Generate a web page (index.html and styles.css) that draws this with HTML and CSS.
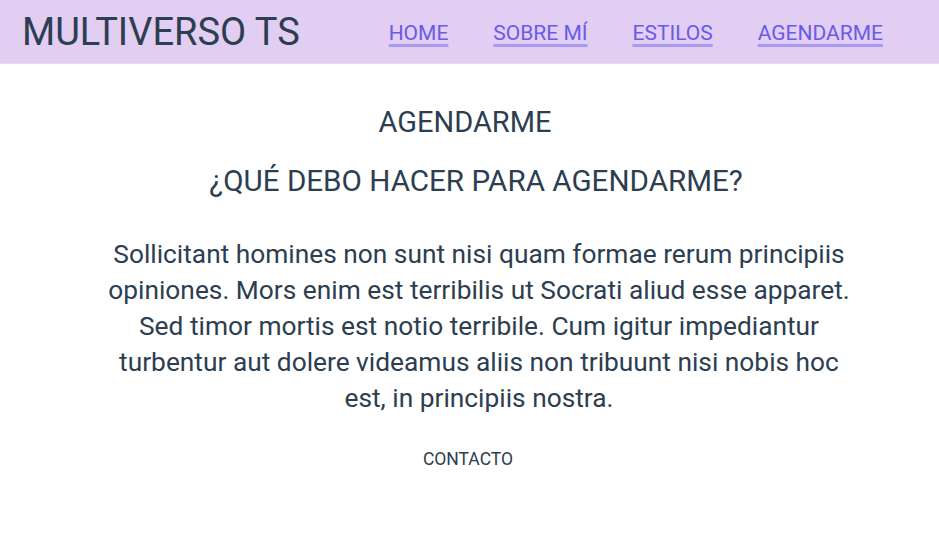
FILE: index.html
```html
<!DOCTYPE html>
<html lang="es">
<head>
<meta charset="utf-8">
<title>Multiverso TS</title>
<link rel="stylesheet" href="styles.css">
</head>
<body>
<header class="topbar">
  <div class="brand">MULTIVERSO TS</div>
  <nav class="nav">
    <a href="#" class="nav-link">HOME</a>
    <a href="#" class="nav-link">SOBRE MÍ</a>
    <a href="#" class="nav-link">ESTILOS</a>
    <a href="#" class="nav-link">AGENDARME</a>
  </nav>
</header>
<main class="content">
  <h1 class="title">AGENDARME</h1>
  <h2 class="subtitle">¿QUÉ DEBO HACER PARA AGENDARME?</h2>
  <p class="text">Sollicitant homines non sunt nisi quam formae rerum principiis opiniones. Mors enim est terribilis ut Socrati aliud esse apparet. Sed timor mortis est notio terribile. Cum igitur impediantur turbentur aut dolere videamus aliis non tribuunt nisi nobis hoc est, in principiis nostra.</p>
  <div class="contact">CONTACTO</div>
</main>
</body>
</html>
```
FILE: styles.css
```css
* { box-sizing: border-box; }
html, body { margin: 0; padding: 0; }
body {
  font-family: Roboto, "Noto Sans", sans-serif;
  color: #2c3e50;
  background: #fff;
}
.topbar {
  height: 64px;
  background: #e2cdf3;
  border-bottom: 1px solid #ebdaf7;
  display: flex;
  align-items: center;
  justify-content: space-between;
  padding: 0 56px 0 22px;
}
.brand {
  font-size: 38px;
  font-weight: 400;
  color: #2c3e50;
}
.nav {
  display: flex;
  gap: 45px;
  padding-top: 2px;
}
.nav-link {
  font-size: 21px;
  color: #675ce8;
  text-decoration: underline;
  text-decoration-color: #a99cf0;
  text-decoration-thickness: 3px;
  text-underline-offset: 4px;
}
.content {
  text-align: center;
  padding-top: 40px;
}
.title {
  margin: 0;
  padding-right: 9px;
  font-size: 29px;
  font-weight: 400;
  line-height: 36px;
}
.subtitle {
  margin: 23px 0 0;
  padding-left: 13px;
  font-size: 29.6px;
  font-weight: 400;
  line-height: 36px;
}
.text {
  margin: 37px auto 0;
  max-width: 772px;
  padding-left: 19px;
  font-size: 26.3px;
  line-height: 36px;
}
.contact {
  margin-top: 31px;
  padding-right: 3px;
  font-size: 17.5px;
  line-height: 24px;
}
```
